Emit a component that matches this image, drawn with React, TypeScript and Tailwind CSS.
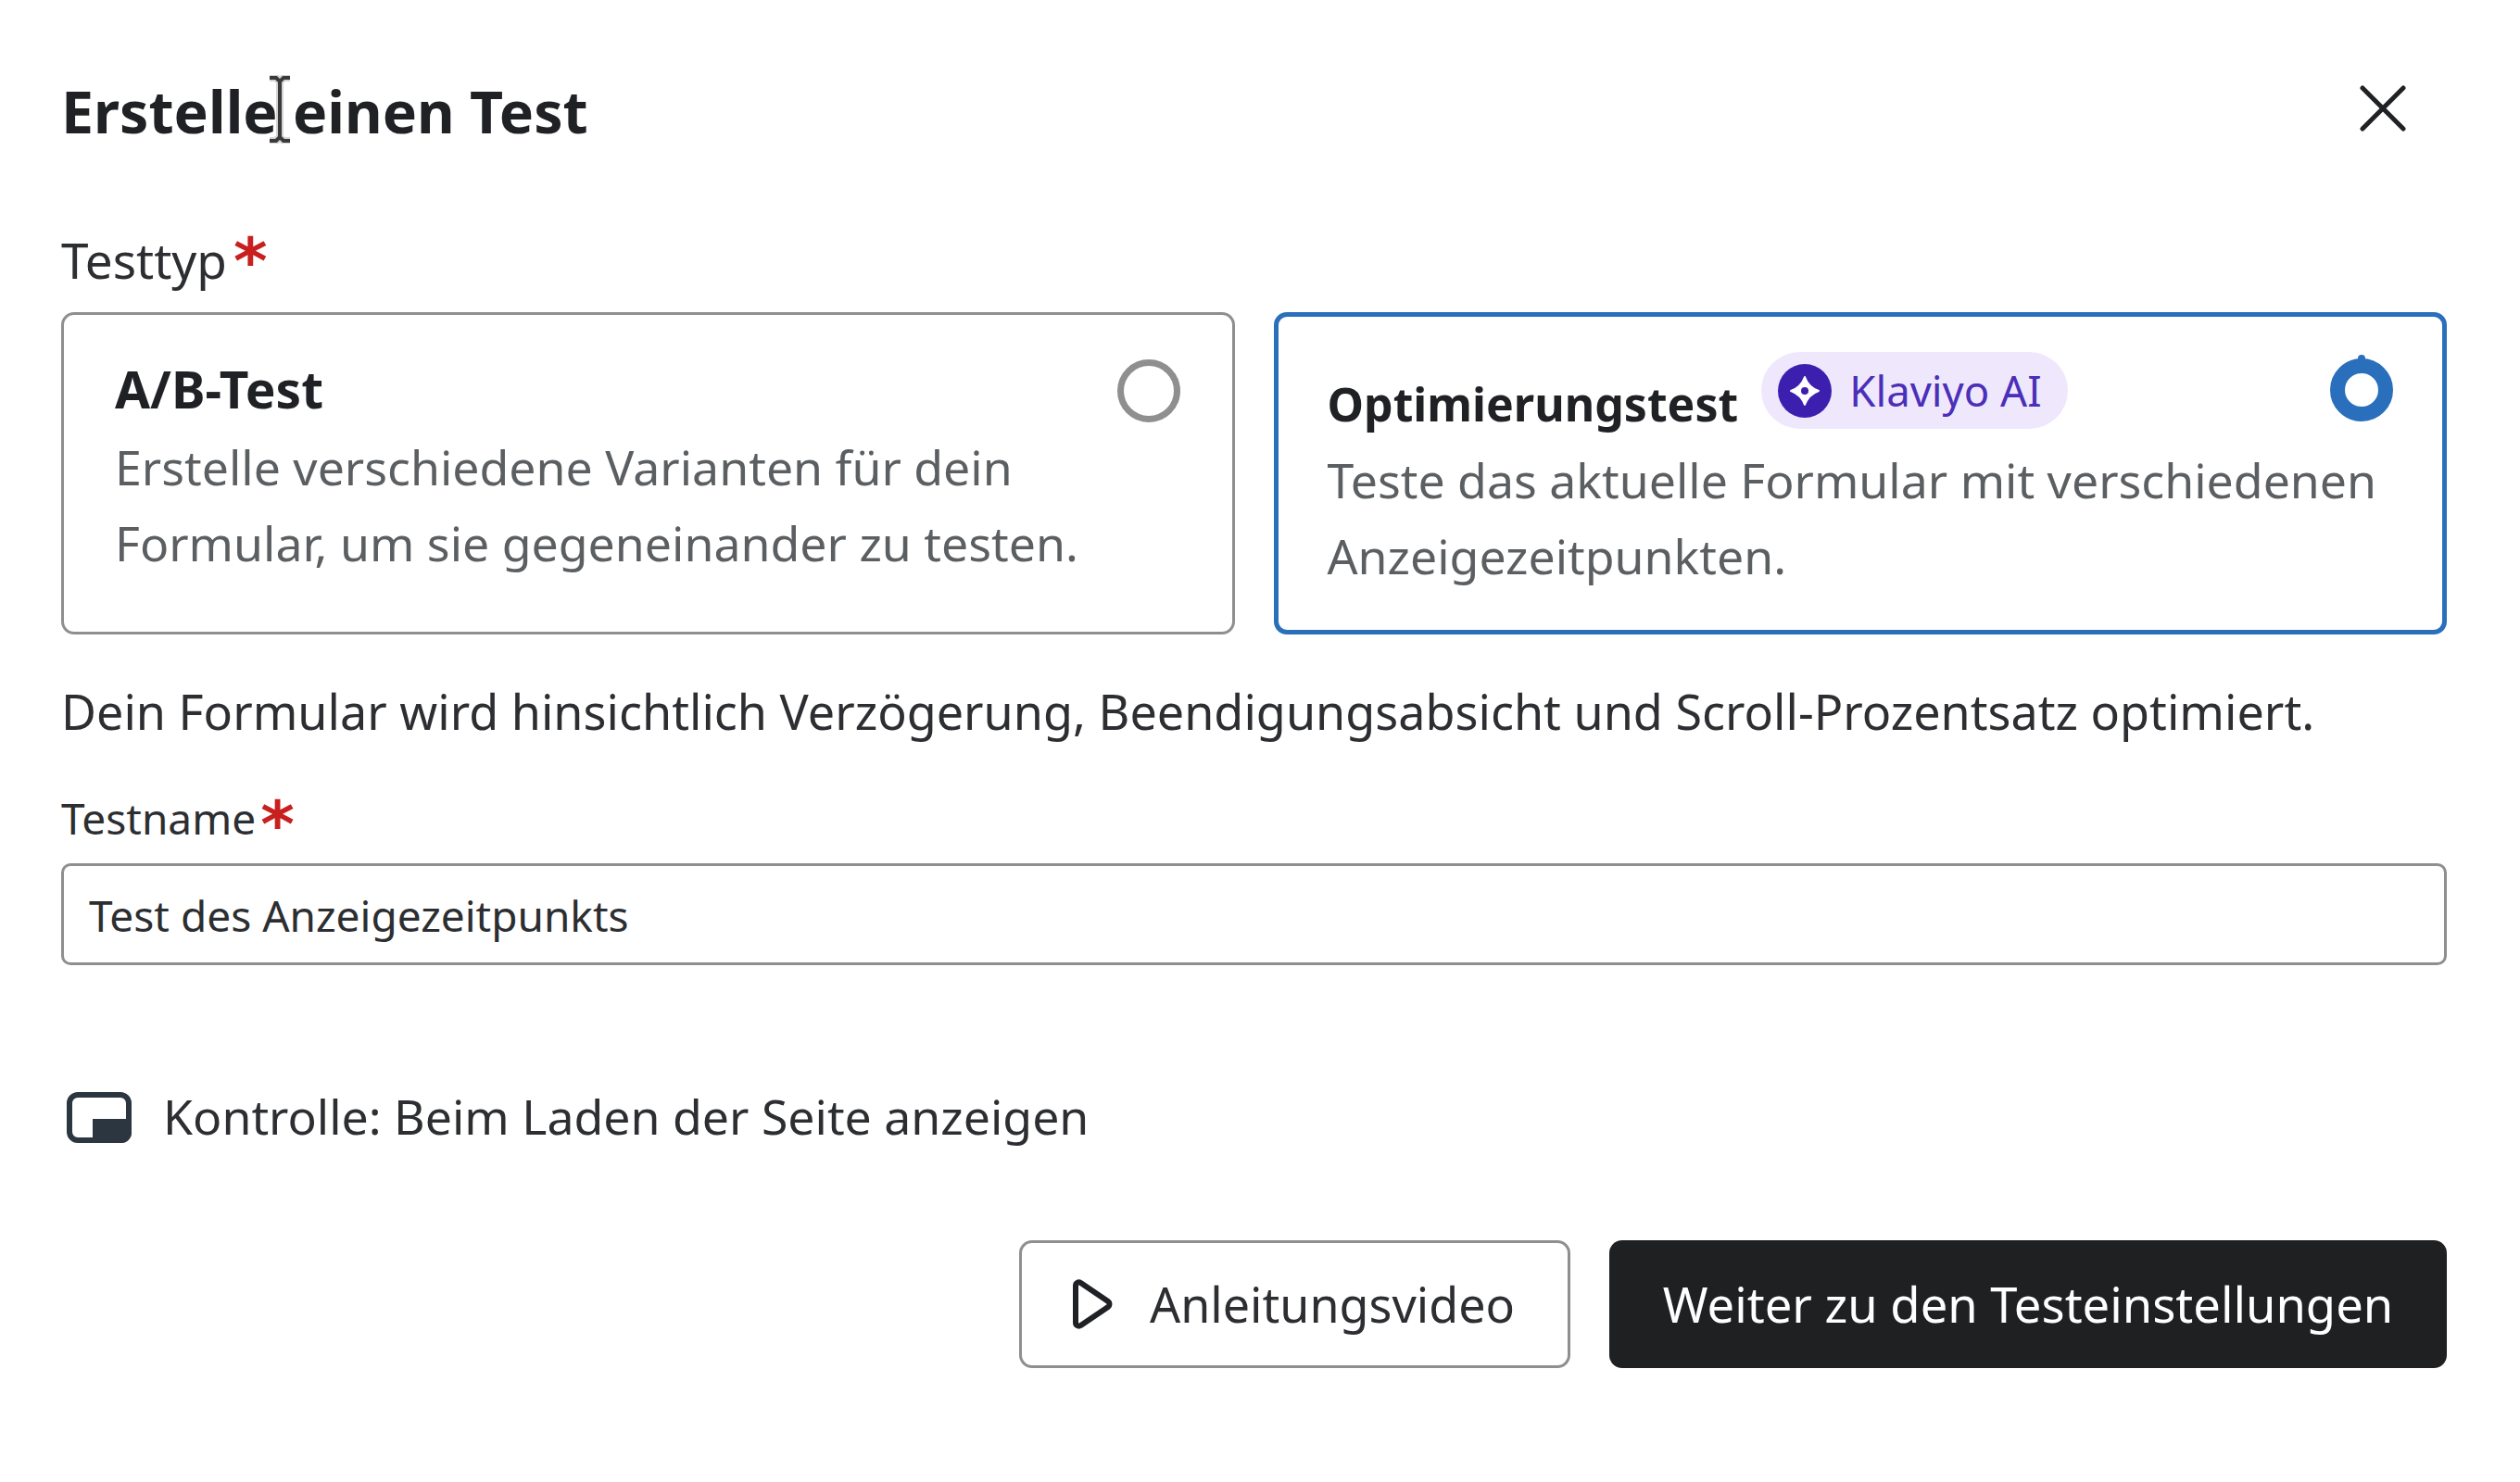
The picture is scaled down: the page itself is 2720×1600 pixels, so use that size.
const CloseIcon = () => (
  <svg width="50" height="50" viewBox="0 0 50 50" fill="none" stroke="#1f2124" strokeWidth="5" strokeLinecap="round" className="-mt-[6px]">
    <path d="M3 3 L47 47 M47 3 L3 47" />
  </svg>
);

const PipIcon = () => (
  <svg width="70" height="55" viewBox="0 0 70 55" className="shrink-0">
    <rect x="3" y="3" width="64" height="49" rx="9" fill="none" stroke="#2b3640" strokeWidth="6" />
    <path d="M28 29 H70 V44 A11 11 0 0 1 59 55 H28 Z" fill="#2b3640" />
  </svg>
);

const PlayIcon = () => (
  <svg width="44" height="54" viewBox="0 0 44 54" fill="none" className="shrink-0">
    <path d="M4 7 C4 4 7 2.5 9.5 4 L39 24 C41 25.5 41 28.5 39 30 L9.5 50 C7 51.5 4 50 4 47 Z" stroke="#1f2124" strokeWidth="6" strokeLinejoin="round" />
  </svg>
);

const SparkIcon = () => (
  <svg width="58" height="58" viewBox="0 0 58 58" className="shrink-0">
    <circle cx="29" cy="29" r="29" fill="#3c1fae" />
    <path d="M29 14 Q33 25 44 29 Q33 33 29 44 Q25 33 14 29 Q25 25 29 14 Z" fill="#fff" stroke="#fff" strokeWidth="2" strokeLinejoin="round" />
    <circle cx="29" cy="29" r="4" fill="#3c1fae" />
  </svg>
);

const SelectedRadio = () => (
  <svg width="68" height="72" viewBox="0 0 68 72" fill="none" className="absolute right-[53px] top-[41px]">
    <circle cx="34" cy="38" r="26" stroke="#2a6fbb" strokeWidth="16" />
    <circle cx="34" cy="4" r="4" fill="#2a6fbb" />
  </svg>
);

const TextCursor = () => (
  <svg width="30" height="74" viewBox="0 0 30 74" className="absolute left-[287px] top-[81px]" fill="none">
    <path d="M4 3 H11 L15 7 L19 3 H26 M15 7 V67 M4 71 H11 L15 67 L19 71 H26" stroke="#d4d4d4" strokeWidth="8" />
    <path d="M4 3 H11 L15 7 L19 3 H26 M15 7 V67 M4 71 H11 L15 67 L19 71 H26" stroke="#3a3a3a" strokeWidth="4" />
  </svg>
);

const App = () => {
  return (
    <div className="relative h-[1600px] w-[2720px] overflow-hidden bg-white pl-[66px] pr-[79px] pt-[80px] font-['Noto_Sans',sans-serif] text-[#1f2124]">
      <div className="flex h-[80px] items-center justify-between pr-[44px]">
        <h1 className="text-[62.6px] font-bold leading-[80px]">Erstelle einen Test</h1>
        <CloseIcon />
      </div>
      <TextCursor />

      <div className="mt-[91px] flex h-[60px] text-[53px] leading-[60px] text-[#2c2e31]">
        Testtyp
        <span className="ml-[7px] mt-[1px] font-['DejaVu_Sans',sans-serif] text-[70px] font-bold leading-[60px] text-[#c8201f]">*</span>
      </div>

      <div className="mt-[26px] grid h-[348px] grid-cols-2 gap-[42px]">
        <div className="relative rounded-[14px] border-[3px] border-[#8f8f8f] pl-[55px] pr-[40px] pt-[52px]">
          <div className="h-[56px] text-[55px] font-bold leading-[56px]">A/B-Test</div>
          <p className="mt-[15px] text-[51.8px] leading-[82px] text-[#5c5f62]">
            Erstelle verschiedene Varianten für dein Formular, um sie gegeneinander zu testen.
          </p>
          <span className="absolute right-[56px] top-[48px] h-[68px] w-[68px] rounded-full border-[7px] border-[#8f8f8f]" />
        </div>

        <div className="relative rounded-[14px] border-[5px] border-[#2a6fbb] pl-[53px] pr-[30px] pt-[38px]">
          <div className="flex h-[83px] items-center gap-[25px]">
            <span className="mt-[28px] text-[50px] font-bold leading-[56px]">Optimierungstest</span>
            <span className="flex h-[83px] items-center gap-[19px] rounded-full bg-[#efe8fd] pl-[18px] pr-[28px] text-[45.5px] text-[#4b2fb8]">
              <SparkIcon />
              Klaviyo AI
            </span>
          </div>
          <p className="mt-[14px] text-[51.8px] leading-[82px] text-[#5c5f62]">
            Teste das aktuelle Formular mit verschiedenen Anzeigezeitpunkten.
          </p>
          <SelectedRadio />
        </div>
      </div>

      <p className="mt-[48px] text-[52.1px] leading-[70px] text-[#2c2e31]">
        Dein Formular wird hinsichtlich Verzögerung, Beendigungsabsicht und Scroll-Prozentsatz optimiert.
      </p>

      <div className="mt-[52px] flex h-[56px] text-[46px] leading-[56px] text-[#2c2e31]">
        Testname
        <span className="ml-[5px] mt-[7px] font-['DejaVu_Sans',sans-serif] text-[70px] font-bold leading-[56px] text-[#c8201f]">*</span>
      </div>

      <div className="mt-[21px] flex h-[110px] items-center rounded-[10px] border-[3px] border-[#8f8f8f] pl-[27px] pt-[3px] text-[46px] text-[#2c2e31]">
        Test des Anzeigezeitpunkts
      </div>

      <div className="mt-[134px] flex h-[60px] items-center gap-[34px] pl-[6px] text-[51.8px] text-[#2c2e31]">
        <PipIcon />
        Kontrolle: Beim Laden der Seite anzeigen
      </div>

      <div className="mt-[103px] flex justify-end gap-[42px]">
        <button className="flex h-[138px] w-[595px] items-center gap-[40px] rounded-[14px] border-[3px] border-[#8f8f8f] pl-[54px] text-[52px] text-[#2c2e31]">
          <PlayIcon />
          Anleitungsvideo
        </button>
        <button className="flex h-[138px] w-[904px] items-center justify-center rounded-[14px] bg-[#1e2022] text-[52.5px] text-white">
          Weiter zu den Testeinstellungen
        </button>
      </div>
    </div>
  );
};

export default App;
